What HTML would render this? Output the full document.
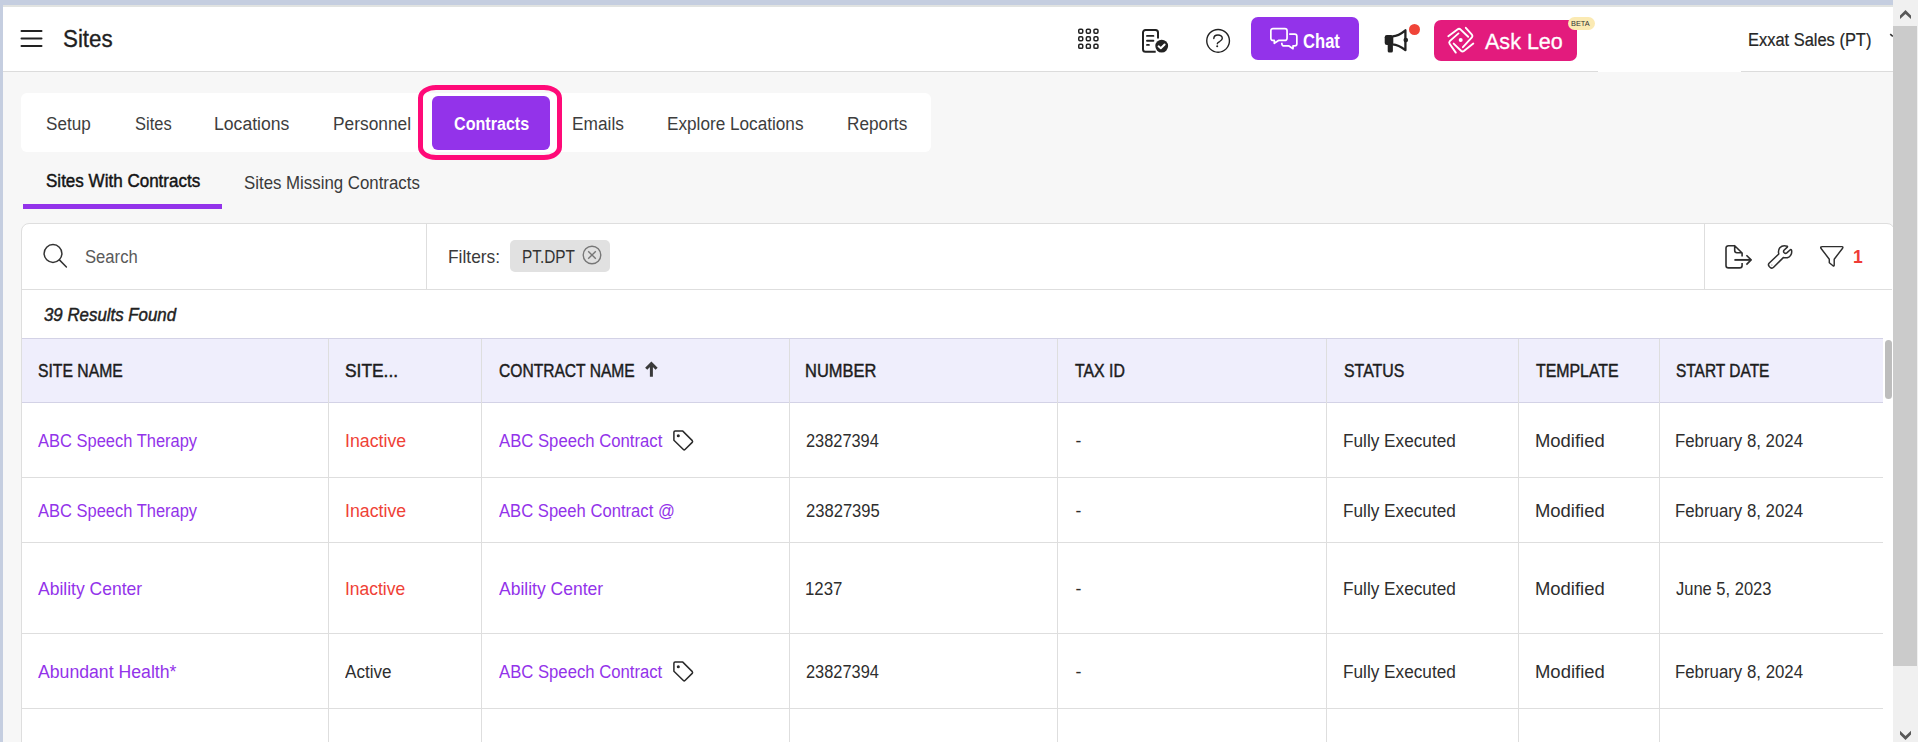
<!DOCTYPE html>
<html><head><meta charset="utf-8">
<style>
*{box-sizing:border-box;margin:0;padding:0}
html,body{width:1918px;height:742px;overflow:hidden;background:#f7f7f7;font-family:"Liberation Sans",sans-serif;color:#333}
.a{position:absolute}
#frameT{left:0;top:0;width:1918px;height:5px;background:#c5cee0}
#frameL{left:0;top:0;width:3px;height:742px;background:#c5cee0}
#hdr{left:3px;top:5px;width:1890px;height:67px;background:#fff;border-top:2px solid #e1e3e1;border-bottom:1px solid #dcdcdc}
#hdrgap{left:1598px;top:70px;width:143px;height:2px;background:#fff}
.t{position:absolute;white-space:nowrap;line-height:1;transform-origin:0 0}
/* scrollbars */
#sbar{left:1893px;top:0;width:25px;height:742px;background:#f0f0f0}
#sthumb{left:1893px;top:26px;width:24px;height:640px;background:#cbcbcb}
#ithumb{left:1885px;top:340px;width:7px;height:59px;background:#bdbdbd;border-radius:4px}
/* tabs */
#tabs{left:21px;top:93px;width:910px;height:59px;background:#fff;border-radius:6px}
#ctab{left:432px;top:96px;width:118px;height:54px;background:#9333ea;border-radius:6px}
#cring{left:418px;top:85px;width:144px;height:75px;border:5px solid #ff0a78;border-radius:18px/13px}
.tab{font-size:17.5px;color:#3f3f3f;top:116px}
/* card */
#card{left:21px;top:223px;width:1874px;height:560px;background:#fff;border:1px solid #dedede;border-radius:8px}
.vl{position:absolute;width:1px;background:#dedede}
.hl{position:absolute;height:1px;background:#dedede}
#thead{left:22px;top:338px;width:1861px;height:65px;background:#efeefc;border-top:1px solid #d3d2e6;border-bottom:1px solid #d3d2e6}
.th{font-size:16px;font-weight:bold;color:#222;top:363px}
.td{font-size:16.5px;color:#333}
.lnk{color:#9333ea}
.red{color:#ef3b3b}
</style></head><body>
<div class="a" id="frameT"></div>
<div class="a" id="frameL"></div>
<div class="a" id="hdr"></div>
<div class="a" id="hdrgap"></div>

<!-- hamburger -->
<svg class="a" style="left:20px;top:28px" width="24" height="22" viewBox="0 0 24 22"><path d="M1.5 3H21.5M1.5 10.5H21.5M1.5 18H21.5" stroke="#222" stroke-width="2" stroke-linecap="round"/></svg>

<!-- header icons -->
<svg class="a" style="left:1077px;top:27px" width="24" height="24" viewBox="0 0 24 24" fill="none" stroke="#222" stroke-width="1.5"><rect x="1.75" y="2.15" width="4" height="4" rx="1.2"/><rect x="9.35" y="2.15" width="4" height="4" rx="1.2"/><rect x="16.95" y="2.15" width="4" height="4" rx="1.2"/><rect x="1.75" y="9.75" width="4" height="4" rx="1.2"/><rect x="9.35" y="9.75" width="4" height="4" rx="1.2"/><rect x="16.95" y="9.75" width="4" height="4" rx="1.2"/><rect x="1.75" y="17.35" width="4" height="4" rx="1.2"/><rect x="9.35" y="17.35" width="4" height="4" rx="1.2"/><rect x="16.95" y="17.35" width="4" height="4" rx="1.2"/></svg>
<svg class="a" style="left:1140px;top:28px" width="30" height="27" viewBox="0 0 30 27" fill="none">
<path d="M15.7 23.7H5.5A2.5 2.5 0 0 1 3 21.2V4.5A2.5 2.5 0 0 1 5.5 2H15.5A2.5 2.5 0 0 1 18 4.5V10.4" stroke="#222" stroke-width="2"/>
<path d="M7 7.9H13.4M7 12.7H13.4M7 16.9H8.9" stroke="#222" stroke-width="1.9" stroke-linecap="round"/>
<circle cx="21.7" cy="18.1" r="6.4" fill="#222"/>
<path d="M18.6 18.3L20.8 20.2L24.6 16.5" stroke="#fff" stroke-width="2" stroke-linecap="round" stroke-linejoin="round"/>
</svg>
<svg class="a" style="left:1205px;top:28px" width="26" height="26" viewBox="0 0 26 26" fill="none">
<circle cx="13.1" cy="12.85" r="11.35" stroke="#222" stroke-width="1.4"/>
<path d="M8.8 10.6C8.8 8.3 10.6 7 13 7C15.4 7 17.3 8.4 17.3 10.2C17.3 12.2 15.5 13 14.2 13.8C13.2 14.4 12.3 15.1 12.3 15.8" stroke="#222" stroke-width="1.4" stroke-linecap="round"/>
<circle cx="12.2" cy="18.2" r="1" fill="#222"/>
</svg>

<div class="a" style="left:1251px;top:17px;width:108px;height:43px;background:#9333ea;border-radius:7px"></div>
<svg class="a" style="left:1268px;top:26px" width="32" height="26" viewBox="0 0 32 26" fill="none" stroke="#fff" stroke-width="1.7" stroke-linejoin="round">
<path d="M5 2.55H16.9A2.15 2.15 0 0 1 19.05 4.7V12.3A2.15 2.15 0 0 1 16.9 14.45H10.5L6.3 17.3V14.45H5A2.15 2.15 0 0 1 2.85 12.3V4.7A2.15 2.15 0 0 1 5 2.55Z"/>
<path d="M21.2 8.05H26.7A2.15 2.15 0 0 1 28.85 10.2V17.8A2.15 2.15 0 0 1 26.7 19.95H25V22.7L21 19.95H16A2.15 2.15 0 0 1 13.85 17.8V16.8"/>
</svg>

<svg class="a" style="left:1380px;top:24px" width="32" height="32" viewBox="0 0 32 32">
<rect x="4.7" y="11.1" width="8.6" height="9.8" rx="2.2" fill="#222"/>
<rect x="7.7" y="18" width="5.2" height="10.5" rx="1.6" fill="#222"/>
<path d="M12.5 12.3C17 12.2 21.5 9.5 25.4 6.3V26.2C21.5 23 17 20.5 12.5 20.3" stroke="#222" stroke-width="2.3" fill="none" stroke-linejoin="round"/>
<circle cx="25.8" cy="16.1" r="2.3" fill="#222"/>
</svg>
<div class="a" style="left:1408.5px;top:24px;width:11px;height:11px;border-radius:50%;background:#f04438"></div>

<div class="a" style="left:1434px;top:20px;width:143px;height:41px;background:#e31b7d;border-radius:7px"></div>
<svg class="a" style="left:1442px;top:22px" width="38" height="36" viewBox="0 0 38 36" fill="none" stroke="#fff" stroke-width="1.9" stroke-linecap="round" stroke-linejoin="round">
<path d="M6.3 14.3L15.4 7.4Q17.2 6.1 18.7 7.6L26.2 14.8"/>
<path d="M23.8 5.8L29.9 12.6Q31 14 29.9 15.4L20.9 25.2"/>
<path d="M16.5 11.4L8 18.9Q6.6 20.3 7.6 21.7L13.8 30.6"/>
<path d="M11.7 21.6L19 28.8Q20.4 30.1 21.9 29L31.3 21.6"/>
<circle cx="18.7" cy="18" r="2" fill="#fff" stroke="none"/>
</svg>
<div class="a" style="left:1568px;top:17px;width:27px;height:13px;border-radius:7px;background:#fbeab3"></div>


<!-- tabs -->
<div class="a" id="tabs"></div>
<div class="a" id="ctab"></div>
<div class="a" id="cring"></div>

<!-- subtabs -->
<div class="a" style="left:23px;top:204px;width:199px;height:5px;background:#9333ea"></div>

<!-- card -->
<div class="a" id="card"></div>
<div class="vl" style="left:426px;top:224px;height:65px"></div>
<div class="vl" style="left:1704px;top:224px;height:65px"></div>
<div class="hl" style="left:22px;top:289px;width:1870px"></div>
<svg class="a" style="left:41px;top:242px" width="30" height="30" viewBox="0 0 30 30" fill="none" stroke="#333" stroke-width="1.5"><circle cx="12" cy="11.5" r="8.9"/><path d="M18.4 17.9L25.4 25" stroke-linecap="round"/></svg>
<div class="a" style="left:510px;top:240px;width:100px;height:32px;background:#e1e1e1;border-radius:5px"></div>
<svg class="a" style="left:581.3px;top:244.3px" width="22" height="22" viewBox="0 0 22 22" fill="none" stroke="#777" stroke-width="1.4"><circle cx="11" cy="11" r="8.8"/><path d="M7.2 7.2l7.6 7.6M14.8 7.2l-7.6 7.6"/></svg>

<svg class="a" style="left:1720px;top:240px" width="36" height="32" viewBox="0 0 36 32" fill="none" stroke="#2e2e2e" stroke-width="1.6" stroke-linejoin="round">
<path d="M14.7 5.7H8.5A2.5 2.5 0 0 0 6 8.2V25.4A2.5 2.5 0 0 0 8.5 27.9H19.6A2.5 2.5 0 0 0 22.1 25.4V23.1M22.1 16.4V13L14.7 5.7V10.5A2.2 2.2 0 0 0 16.9 12.7H22.1"/>
<path d="M14.4 19.9H31.2" stroke-width="1.9"/><path d="M26.4 15.2L31.1 19.9L26.4 24.6" stroke-width="1.6"/>
</svg>
<svg class="a" style="left:1762px;top:240px" width="34" height="32" viewBox="0 0 34 32" fill="none" stroke="#2e2e2e" stroke-width="1.5" stroke-linejoin="round">
<path d="M21.3 17.6L11.6 27.3Q9.9 29 8 27.2L7.3 26.5Q5.6 24.7 7.3 23L16.8 14Q15.8 10.5 17.8 7.8Q20.6 4.7 25.2 6.2Q25.8 6.6 25.3 7.1L22 10.2Q21 11.5 22.2 12.7Q23.5 13.9 24.8 12.9L28.3 9.7Q29.3 9.2 29.6 10.5Q30.3 14.5 27.2 16.8Q24.5 18.4 21.3 17.6Z"/>
<circle cx="9.9" cy="25" r="0.5" fill="#555" stroke="none"/>
</svg>
<svg class="a" style="left:1814px;top:240px" width="34" height="30" viewBox="0 0 34 30" fill="none" stroke="#2e2e2e" stroke-width="1.45" stroke-linejoin="round">
<path d="M8.3 6.6H27.9Q29.4 6.9 28.6 8.2L20.2 19.2V25Q20.2 26.3 19 25.8L15.3 22.8V19.2L6.9 8.2Q6.3 6.9 7.7 6.7Z"/>
</svg>


<!-- table -->
<div class="a" id="thead"></div>
<div class="vl" style="left:328px;top:339px;height:403px"></div>
<div class="vl" style="left:481px;top:339px;height:403px"></div>
<div class="vl" style="left:789px;top:339px;height:403px"></div>
<div class="vl" style="left:1057px;top:339px;height:403px"></div>
<div class="vl" style="left:1326px;top:339px;height:403px"></div>
<div class="vl" style="left:1518px;top:339px;height:403px"></div>
<div class="vl" style="left:1659px;top:339px;height:403px"></div>
<div class="hl" style="left:22px;top:477px;width:1861px"></div>
<div class="hl" style="left:22px;top:542px;width:1861px"></div>
<div class="hl" style="left:22px;top:633px;width:1861px"></div>
<div class="hl" style="left:22px;top:708px;width:1861px"></div>

<svg class="a" style="left:643px;top:359px" width="16" height="20" viewBox="0 0 16 20"><path d="M8.4 17.8V4.5M3.2 9.7L8.4 4.5L13.6 9.7" stroke="#3a3a3a" stroke-width="3" fill="none"/></svg>

<!-- rows -->




<!-- tag icons -->
<svg class="a" style="left:664px;top:424px" width="34" height="30" viewBox="0 0 34 30" fill="none" stroke="#2a2a2a" stroke-width="1.5" stroke-linejoin="round"><path d="M9.9 8.3Q9.9 7.1 11.1 7.1H18.8L28.3 16.6Q29 17.5 28.2 18.4L21 25.5Q20.2 26.3 19.4 25.5L9.9 16.3Z"/><circle cx="14.3" cy="11.7" r="0.8" fill="#2a2a2a"/></svg>
<svg class="a" style="left:664px;top:655px" width="34" height="30" viewBox="0 0 34 30" fill="none" stroke="#2a2a2a" stroke-width="1.5" stroke-linejoin="round"><path d="M9.9 8.3Q9.9 7.1 11.1 7.1H18.8L28.3 16.6Q29 17.5 28.2 18.4L21 25.5Q20.2 26.3 19.4 25.5L9.9 16.3Z"/><circle cx="14.3" cy="11.7" r="0.8" fill="#2a2a2a"/></svg>

<div class="t" style="left:63.43px;top:28.19px;font-size:23.04px;color:#1f1f1f;-webkit-text-stroke:0.35px #1f1f1f;transform:scaleX(0.9701)">Sites</div>
<div class="t" style="left:45.80px;top:115.33px;font-size:18.63px;color:#3d3d3d;transform:scaleX(0.9190)">Setup</div>
<div class="t" style="left:134.70px;top:115.33px;font-size:18.63px;color:#3d3d3d;transform:scaleX(0.8858)">Sites</div>
<div class="t" style="left:214.35px;top:115.33px;font-size:18.63px;color:#3d3d3d;transform:scaleX(0.9462)">Locations</div>
<div class="t" style="left:332.97px;top:115.33px;font-size:18.63px;color:#3d3d3d;transform:scaleX(0.9311)">Personnel</div>
<div class="t" style="left:454.00px;top:115.33px;font-size:18.63px;color:#ffffff;font-weight:bold;transform:scaleX(0.8652)">Contracts</div>
<div class="t" style="left:571.77px;top:115.33px;font-size:18.63px;color:#3d3d3d;transform:scaleX(0.9291)">Emails</div>
<div class="t" style="left:667.08px;top:115.33px;font-size:18.63px;color:#3d3d3d;transform:scaleX(0.9227)">Explore Locations</div>
<div class="t" style="left:846.68px;top:115.33px;font-size:18.63px;color:#3d3d3d;transform:scaleX(0.9248)">Reports</div>
<div class="t" style="left:45.50px;top:172.53px;font-size:17.92px;color:#141414;-webkit-text-stroke:0.45px #141414;transform:scaleX(0.9510)">Sites With Contracts</div>
<div class="t" style="left:244.00px;top:174.67px;font-size:17.64px;color:#3a3a3a;transform:scaleX(0.9548)">Sites Missing Contracts</div>
<div class="t" style="left:1747.60px;top:31.27px;font-size:18.35px;color:#262626;-webkit-text-stroke:0.2px #262626;transform:scaleX(0.8966)">Exxat Sales (PT)</div>
<div class="t" style="left:1302.50px;top:32.10px;font-size:19.49px;color:#ffffff;font-weight:bold;transform:scaleX(0.8520)">Chat</div>
<div class="t" style="left:1484.50px;top:30.52px;font-size:22.19px;color:#ffffff;-webkit-text-stroke:0.3px #ffffff;transform:scaleX(0.9708)">Ask Leo</div>
<div class="t" style="left:1571.40px;top:19.60px;font-size:7.68px;color:#333333;transform:scaleX(0.9582)">BETA</div>
<div class="t" style="left:84.70px;top:248.75px;font-size:17.78px;color:#5a5a5a;transform:scaleX(0.9367)">Search</div>
<div class="t" style="left:448.42px;top:248.77px;font-size:17.64px;color:#3a3a3a;transform:scaleX(0.9847)">Filters:</div>
<div class="t" style="left:522.43px;top:248.77px;font-size:17.64px;color:#333333;transform:scaleX(0.8724)">PT.DPT</div>
<div class="t" style="left:1853.00px;top:249.09px;font-size:17.50px;color:#ef3b36;font-weight:bold">1</div>
<div class="t" style="left:43.80px;top:306.29px;font-size:18.21px;color:#222222;-webkit-text-stroke:0.45px #222222;font-style:italic;transform:scaleX(0.9265)">39 Results Found</div>
<div class="t" style="left:38.10px;top:362.27px;font-size:18.35px;color:#1c1c1c;-webkit-text-stroke:0.45px #1c1c1c;transform:scaleX(0.8574)">SITE NAME</div>
<div class="t" style="left:345.20px;top:362.27px;font-size:18.35px;color:#1c1c1c;-webkit-text-stroke:0.45px #1c1c1c;transform:scaleX(0.9468)">SITE...</div>
<div class="t" style="left:499.10px;top:362.27px;font-size:18.35px;color:#1c1c1c;-webkit-text-stroke:0.45px #1c1c1c;transform:scaleX(0.8501)">CONTRACT NAME</div>
<div class="t" style="left:805.40px;top:362.27px;font-size:18.35px;color:#1c1c1c;-webkit-text-stroke:0.45px #1c1c1c;transform:scaleX(0.8965)">NUMBER</div>
<div class="t" style="left:1074.90px;top:362.27px;font-size:18.35px;color:#1c1c1c;-webkit-text-stroke:0.45px #1c1c1c;transform:scaleX(0.8631)">TAX ID</div>
<div class="t" style="left:1343.50px;top:362.27px;font-size:18.35px;color:#1c1c1c;-webkit-text-stroke:0.45px #1c1c1c;transform:scaleX(0.8666)">STATUS</div>
<div class="t" style="left:1535.60px;top:362.27px;font-size:18.35px;color:#1c1c1c;-webkit-text-stroke:0.45px #1c1c1c;transform:scaleX(0.8659)">TEMPLATE</div>
<div class="t" style="left:1676.40px;top:362.27px;font-size:18.35px;color:#1c1c1c;-webkit-text-stroke:0.45px #1c1c1c;transform:scaleX(0.8432)">START DATE</div>
<div class="t" style="left:38.00px;top:432.79px;font-size:17.50px;color:#9333ea;transform:scaleX(0.9418)">ABC Speech Therapy</div>
<div class="t" style="left:345.19px;top:432.79px;font-size:17.50px;color:#ef4136;transform:scaleX(1.0148)">Inactive</div>
<div class="t" style="left:498.50px;top:432.79px;font-size:17.50px;color:#9333ea;transform:scaleX(0.9539)">ABC Speech Contract</div>
<div class="t" style="left:806.30px;top:432.79px;font-size:17.50px;color:#2e2e2e;transform:scaleX(0.9351)">23827394</div>
<div class="t" style="left:1075.50px;top:432.79px;font-size:17.50px;color:#2e2e2e">-</div>
<div class="t" style="left:1342.52px;top:432.79px;font-size:17.50px;color:#2e2e2e;transform:scaleX(0.9827)">Fully Executed</div>
<div class="t" style="left:1534.55px;top:432.79px;font-size:17.50px;color:#2e2e2e;transform:scaleX(1.0534)">Modified</div>
<div class="t" style="left:1675.44px;top:432.79px;font-size:17.50px;color:#2e2e2e;transform:scaleX(0.9605)">February 8, 2024</div>
<div class="t" style="left:38.00px;top:502.79px;font-size:17.50px;color:#9333ea;transform:scaleX(0.9418)">ABC Speech Therapy</div>
<div class="t" style="left:345.19px;top:502.79px;font-size:17.50px;color:#ef4136;transform:scaleX(1.0148)">Inactive</div>
<div class="t" style="left:498.50px;top:502.79px;font-size:17.50px;color:#9333ea;transform:scaleX(0.9497)">ABC Speeh Contract @</div>
<div class="t" style="left:806.30px;top:502.79px;font-size:17.50px;color:#2e2e2e;transform:scaleX(0.9472)">23827395</div>
<div class="t" style="left:1075.50px;top:502.79px;font-size:17.50px;color:#2e2e2e">-</div>
<div class="t" style="left:1342.52px;top:502.79px;font-size:17.50px;color:#2e2e2e;transform:scaleX(0.9827)">Fully Executed</div>
<div class="t" style="left:1534.55px;top:502.79px;font-size:17.50px;color:#2e2e2e;transform:scaleX(1.0534)">Modified</div>
<div class="t" style="left:1675.44px;top:502.79px;font-size:17.50px;color:#2e2e2e;transform:scaleX(0.9605)">February 8, 2024</div>
<div class="t" style="left:37.60px;top:580.67px;font-size:17.64px;color:#9333ea;transform:scaleX(0.9939)">Ability Center</div>
<div class="t" style="left:345.21px;top:580.67px;font-size:17.64px;color:#ef4136;transform:scaleX(0.9910)">Inactive</div>
<div class="t" style="left:498.50px;top:580.67px;font-size:17.64px;color:#9333ea;transform:scaleX(0.9939)">Ability Center</div>
<div class="t" style="left:805.35px;top:580.67px;font-size:17.64px;color:#2e2e2e;transform:scaleX(0.9544)">1237</div>
<div class="t" style="left:1075.50px;top:580.67px;font-size:17.64px;color:#2e2e2e">-</div>
<div class="t" style="left:1342.52px;top:580.67px;font-size:17.64px;color:#2e2e2e;transform:scaleX(0.9755)">Fully Executed</div>
<div class="t" style="left:1534.55px;top:580.67px;font-size:17.64px;color:#2e2e2e;transform:scaleX(1.0460)">Modified</div>
<div class="t" style="left:1676.40px;top:580.67px;font-size:17.64px;color:#2e2e2e;transform:scaleX(0.9362)">June 5, 2023</div>
<div class="t" style="left:37.60px;top:663.55px;font-size:17.78px;color:#9333ea;transform:scaleX(0.9938)">Abundant Health*</div>
<div class="t" style="left:344.90px;top:663.55px;font-size:17.78px;color:#2e2e2e;transform:scaleX(0.9609)">Active</div>
<div class="t" style="left:498.50px;top:663.55px;font-size:17.78px;color:#9333ea;transform:scaleX(0.9393)">ABC Speech Contract</div>
<div class="t" style="left:806.30px;top:663.55px;font-size:17.78px;color:#2e2e2e;transform:scaleX(0.9222)">23827394</div>
<div class="t" style="left:1075.50px;top:663.55px;font-size:17.78px;color:#2e2e2e">-</div>
<div class="t" style="left:1342.53px;top:663.55px;font-size:17.78px;color:#2e2e2e;transform:scaleX(0.9683)">Fully Executed</div>
<div class="t" style="left:1534.56px;top:663.55px;font-size:17.78px;color:#2e2e2e;transform:scaleX(1.0388)">Modified</div>
<div class="t" style="left:1675.45px;top:663.55px;font-size:17.78px;color:#2e2e2e;transform:scaleX(0.9463)">February 8, 2024</div>
<svg class="a" style="left:1886px;top:30px" width="7" height="10" viewBox="0 0 7 10"><path d="M4.2 4.2L6.8 6.4" stroke="#333" stroke-width="1.6"/></svg>
<!-- scrollbars -->
<div class="a" id="ithumb"></div>
<div class="a" id="sbar"></div>
<div class="a" id="sthumb"></div>
<svg class="a" style="left:1893px;top:0px" width="25" height="26" viewBox="1893 0 25 26"><path d="M1900 19.1L1905.5 13.9L1911 19.1V15.5L1905.5 9.9L1900 15.5Z" fill="#585858"/></svg>
<svg class="a" style="left:1893px;top:716px" width="25" height="26" viewBox="1893 716 25 26"><path d="M1900 730.8L1905.5 736L1911 730.8V734.4L1905.5 740L1900 734.4Z" fill="#585858"/></svg>
</body></html>
